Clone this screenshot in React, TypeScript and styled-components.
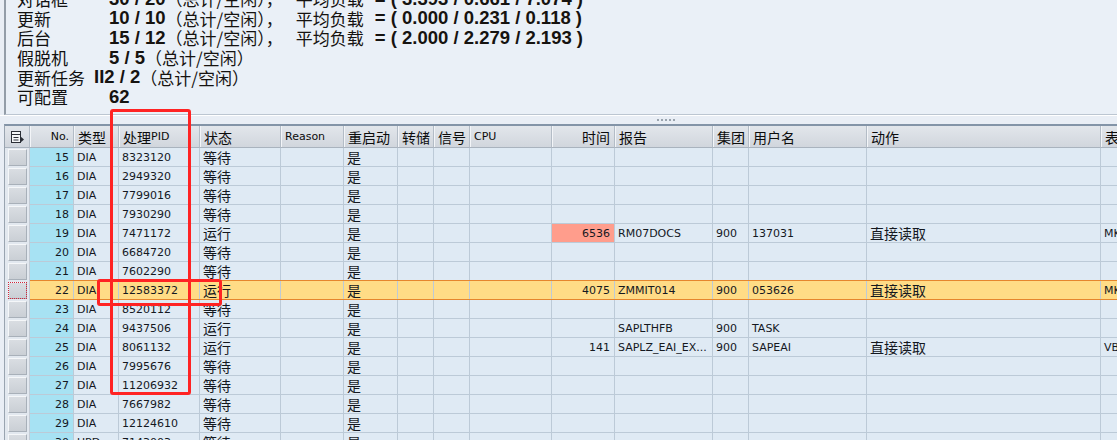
import styled, { createGlobalStyle } from 'styled-components';

const CJK = `"Noto Sans CJK SC", "Noto Sans", sans-serif`;
const LATIN = `"DejaVu Sans", "Noto Sans CJK SC", sans-serif`;
const NUM = `"Liberation Sans", Arial, "Noto Sans CJK SC", sans-serif`;

const GlobalStyle = createGlobalStyle`
  html, body { margin: 0; padding: 0; }
  body { background: #e9eef5; font-family: ${LATIN}; color: #14181f; }
`;

type Col = { title?: string; suffix?: string; latin?: boolean; w: number; right?: boolean };

const columns: Col[] = [
  { w: 25 },
  { title: 'No.', latin: true, w: 44, right: true },
  { title: '类型', w: 45 },
  { title: '处理', suffix: 'PID', w: 81 },
  { title: '状态', w: 81 },
  { title: 'Reason', latin: true, w: 63 },
  { title: '重启动', w: 54 },
  { title: '转储', w: 36 },
  { title: '信号', w: 36 },
  { title: 'CPU', latin: true, w: 82 },
  { title: '时间', w: 63, right: true },
  { title: '报告', w: 98 },
  { title: '集团', w: 36 },
  { title: '用户名', w: 118 },
  { title: '动作', w: 234 },
  { title: '表', w: 120 },
];
const template = columns.map((c) => `${c.w}px`).join(' ');

type Proc = {
  no: string; type: string; pid: string; status: string;
  time?: string; report?: string; client?: string; user?: string; action?: string; table?: string;
  hot?: boolean; selected?: boolean;
};

const procs: Proc[] = [
  { no: '15', type: 'DIA', pid: '8323120', status: '等待' },
  { no: '16', type: 'DIA', pid: '2949320', status: '等待' },
  { no: '17', type: 'DIA', pid: '7799016', status: '等待' },
  { no: '18', type: 'DIA', pid: '7930290', status: '等待' },
  { no: '19', type: 'DIA', pid: '7471172', status: '运行', time: '6536', report: 'RM07DOCS', client: '900', user: '137031', action: '直接读取', table: 'MKPF', hot: true },
  { no: '20', type: 'DIA', pid: '6684720', status: '等待' },
  { no: '21', type: 'DIA', pid: '7602290', status: '等待' },
  { no: '22', type: 'DIA', pid: '12583372', status: '运行', time: '4075', report: 'ZMMIT014', client: '900', user: '053626', action: '直接读取', table: 'MKPF', selected: true },
  { no: '23', type: 'DIA', pid: '8520112', status: '等待' },
  { no: '24', type: 'DIA', pid: '9437506', status: '运行', report: 'SAPLTHFB', client: '900', user: 'TASK' },
  { no: '25', type: 'DIA', pid: '8061132', status: '运行', time: '141', report: 'SAPLZ_EAI_EX...', client: '900', user: 'SAPEAI', action: '直接读取', table: 'VBAK' },
  { no: '26', type: 'DIA', pid: '7995676', status: '等待' },
  { no: '27', type: 'DIA', pid: '11206932', status: '等待' },
  { no: '28', type: 'DIA', pid: '7667982', status: '等待' },
  { no: '29', type: 'DIA', pid: '12124610', status: '等待' },
  { no: '30', type: 'UPD', pid: '7143003', status: '等待' },
];

type Info = { label: string; num: string; load?: string; narrow?: boolean; bare?: boolean };

const info: Info[] = [
  { label: '对话框', num: '30 / 20', load: '( 3.393 / 0.661 / 7.074 )' },
  { label: '更新', num: '10 / 10', load: '( 0.000 / 0.231 / 0.118 )' },
  { label: '后台', num: '15 / 12', load: '( 2.000 / 2.279 / 2.193 )' },
  { label: '假脱机', num: '5 / 5' },
  { label: '更新任务', num: 'II2 / 2', narrow: true },
  { label: '可配置', num: '62', bare: true },
];

const Page = styled.div`
  position: relative;
  width: 1117px;
  height: 440px;
  overflow: hidden;
  background: #e9eef5;
`;

const TopPanel = styled.div`
  height: 114px;
  margin-left: 4px;
  border-left: 2px solid #939da8;
  border-bottom: 1px solid #bcc6d1;
  overflow: hidden;
  background: #eaf0f7;
`;

const InfoList = styled.div`
  margin-top: -11px;
  padding-left: 11px;
`;

const InfoRow = styled.div`
  display: flex;
  align-items: center;
  height: 19.6px;
  white-space: nowrap;
`;

const Label = styled.span<{ $w: number }>`
  width: ${(p) => p.$w}px;
  flex: none;
  font-family: ${CJK};
  font-size: 17px;
  color: #111;
`;

const Num = styled.span<{ $gap?: number }>`
  margin-left: ${(p) => p.$gap ?? 0}px;
  font-family: ${NUM};
  font-weight: bold;
  font-size: 18.5px;
  color: #161310;
`;

const Soft = styled.span<{ $gap?: number }>`
  margin-left: ${(p) => p.$gap ?? 0}px;
  font-family: ${CJK};
  font-size: 17px;
  color: #161310;
`;

const Splitter = styled.div`
  height: 9px;
  display: flex;
  align-items: center;
  border-top: 1px solid #ffffff;
  box-sizing: border-box;
`;

const Grip = styled.div`
  margin-left: 657px;
  display: flex;
  gap: 2px;
`;

const GripDot = styled.span`
  width: 2px;
  height: 2px;
  background: #9aa4ae;
`;

const TableWrap = styled.div`
  border-top: 2px solid #8394a7;
  margin-left: 4px;
  border-left: 1px solid #99a4b0;
  overflow: hidden;
`;

const HeadRow = styled.div`
  display: grid;
  grid-template-columns: ${template};
  height: 22px;
`;

const HeadCell = styled.div<{ $right?: boolean; $latin?: boolean }>`
  box-sizing: border-box;
  display: flex;
  align-items: center;
  justify-content: ${(p) => (p.$right ? 'flex-end' : 'flex-start')};
  padding: 0 4px 0 4px;
  background: linear-gradient(#e2e6eb, #d1d6dd);
  border-right: 1px solid #b3bcc6;
  border-bottom: 1px solid #a9b3be;
  box-shadow: inset 1px 0 #f3f5f8;
  font-family: ${(p) => (p.$latin ? LATIN : CJK)};
  font-size: ${(p) => (p.$latin ? '11px' : '14px')};
  color: #0c0c0c;
  white-space: nowrap;
  overflow: hidden;
`;

const Small = styled.span`
  font-family: ${LATIN};
  font-size: 11px;
`;

const Row = styled.div<{ $selected?: boolean }>`
  position: relative;
  display: grid;
  grid-template-columns: ${template};
  height: 19px;

  &::after {
    content: '';
    display: ${(p) => (p.$selected ? 'block' : 'none')};
    position: absolute;
    left: 25px;
    right: 0;
    top: -1px;
    bottom: 0;
    border-top: 1px solid #e5862d;
    border-bottom: 1px solid #e5862d;
    pointer-events: none;
  }
`;

type Tone = 'plain' | 'index' | 'hot' | 'selected';
const tones: Record<Tone, string> = {
  plain: '#dfeaf4',
  index: '#a7e2f3',
  hot: '#ff9d8c',
  selected: '#ffdc86',
};

const Cell = styled.div<{ $right?: boolean; $cjk?: boolean; $tone: Tone }>`
  box-sizing: border-box;
  height: 19px;
  display: flex;
  align-items: center;
  justify-content: ${(p) => (p.$right ? 'flex-end' : 'flex-start')};
  padding: 0 4px 0 3px;
  background: ${(p) => tones[p.$tone]};
  border-right: 1px solid #bccad7;
  border-bottom: 1px solid #bccad7;
  font-family: ${(p) => (p.$cjk ? CJK : LATIN)};
  font-size: ${(p) => (p.$cjk ? '14px' : '11px')};
  color: #14181f;
  white-space: nowrap;
  overflow: hidden;
`;

const SelCell = styled.div`
  box-sizing: border-box;
  height: 19px;
  display: flex;
  padding: 1px 2px 1px 3px;
  background: #e2e8ef;
  border-right: 1px solid #c3ccd6;
`;

const SelButton = styled.div<{ $focus?: boolean }>`
  flex: 1;
  box-sizing: border-box;
  background: linear-gradient(#d9dde2, #cacfd5);
  border: 1px solid;
  border-color: #f5f7f9 #a8b0b9 #a8b0b9 #f5f7f9;
  outline: ${(p) => (p.$focus ? '1px dotted #d0263a' : 'none')};
  outline-offset: -1px;
`;

const HeadSel = styled.div`
  box-sizing: border-box;
  display: flex;
  align-items: center;
  justify-content: center;
  background: linear-gradient(#e2e6eb, #d1d6dd);
  border-right: 1px solid #b3bcc6;
  border-bottom: 1px solid #a9b3be;
`;

const Mark = styled.div<{ $x: number; $y: number; $w: number; $h: number }>`
  position: absolute;
  left: ${(p) => p.$x}px;
  top: ${(p) => p.$y}px;
  width: ${(p) => p.$w}px;
  height: ${(p) => p.$h}px;
  box-sizing: border-box;
  border: 3px solid #ff2323;
  border-radius: 3px;
  pointer-events: none;
`;

const isCjk = (s: string) => /[\u4e00-\u9fff]/.test(s);

function LayoutIcon() {
  return (
    <svg width="15" height="14" viewBox="0 0 15 14">
      <rect x="1.5" y="1.5" width="9" height="11" fill="#f4f6f8" stroke="#2b2f36" />
      <line x1="1.5" y1="4.5" x2="10.5" y2="4.5" stroke="#2b2f36" />
      <line x1="3.5" y1="7.5" x2="8.5" y2="7.5" stroke="#2b2f36" />
      <line x1="3.5" y1="10" x2="8.5" y2="10" stroke="#2b2f36" />
      <path d="M10 6 L14 9.5 L10 13 Z" fill="#2b2f36" />
    </svg>
  );
}

function ProcRow({ p }: { p: Proc }) {
  const values = [
    p.no, p.type, p.pid, p.status, '', '是', '', '', '',
    p.time ?? '', p.report ?? '', p.client ?? '', p.user ?? '', p.action ?? '', p.table ?? '',
  ];
  return (
    <Row $selected={p.selected}>
      <SelCell>
        <SelButton $focus={p.selected} />
      </SelCell>
      {values.map((v, i) => {
        const col = columns[i + 1];
        let tone: Tone = i === 0 ? 'index' : 'plain';
        if (p.hot && i === 9) tone = 'hot';
        if (p.selected) tone = 'selected';
        return (
          <Cell key={i} $right={col.right} $cjk={isCjk(v)} $tone={tone}>
            {v}
          </Cell>
        );
      })}
    </Row>
  );
}

export default function App() {
  return (
    <Page>
      <GlobalStyle />
      <TopPanel>
        <InfoList>
          {info.map((r) => (
            <InfoRow key={r.label}>
              <Label $w={r.narrow ? 77 : 92}>{r.label}</Label>
              <Num>{r.num}</Num>
              {!r.bare && <Soft>（总计/空闲）{r.load ? '，' : ''}</Soft>}
              {r.load && <Soft $gap={13}>平均负载</Soft>}
              {r.load && <Num $gap={11}>= {r.load}</Num>}
            </InfoRow>
          ))}
        </InfoList>
      </TopPanel>
      <Splitter>
        <Grip>
          {[0, 1, 2, 3, 4].map((d) => (
            <GripDot key={d} />
          ))}
        </Grip>
      </Splitter>
      <TableWrap>
        <HeadRow>
          <HeadSel>
            <LayoutIcon />
          </HeadSel>
          {columns.slice(1).map((c) => (
            <HeadCell key={c.title} $right={c.right} $latin={c.latin}>
              {c.title}
              {c.suffix && <Small>{c.suffix}</Small>}
            </HeadCell>
          ))}
        </HeadRow>
        {procs.map((p) => (
          <ProcRow key={p.no} p={p} />
        ))}
      </TableWrap>
      <Mark $x={110} $y={109} $w={81} $h={286} />
      <Mark $x={97} $y={279} $w={125} $h={27} />
    </Page>
  );
}
